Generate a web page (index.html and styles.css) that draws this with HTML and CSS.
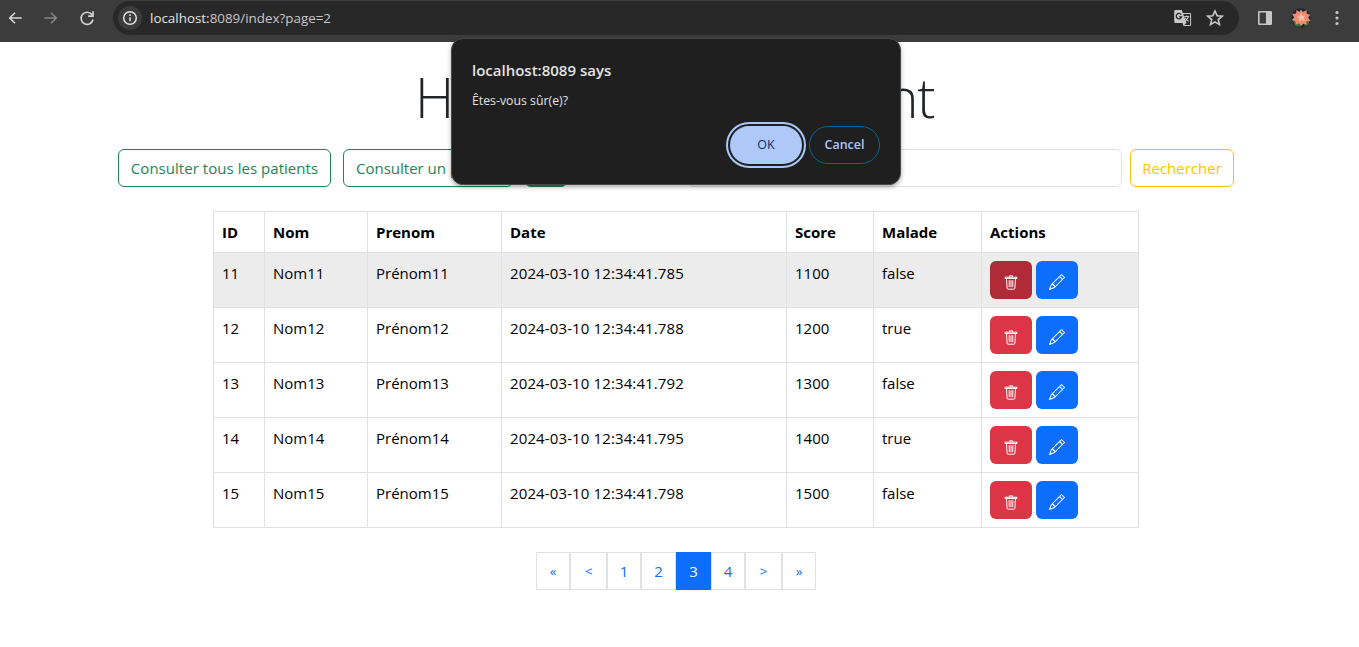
FILE: index.html
```html
<!DOCTYPE html>
<html lang="fr">
<head>
<meta charset="utf-8">
<title>Hospital Management</title>
<link rel="stylesheet" href="styles.css">
</head>
<body>
<svg class="defs" width="0" height="0">
  <symbol id="trash" viewBox="0 0 16 16"><path d="M6.500 1.800h3v1.200M6.500 3V1.800M2 3.200h12v1.300H2zM3.500 4.500l.6 9.800q.1.900 1 .900h5.800q.9 0 1-.900l.6-9.800M6.200 6.200v7M8 6.200v7M9.800 6.200v7"/></symbol>
  <symbol id="pencil" viewBox="0 0 16 16"><path d="M12.146.146a.5.5 0 0 1 .708 0l3 3a.5.5 0 0 1 0 .708l-10 10a.5.5 0 0 1-.168.110l-5 2a.5.5 0 0 1-.650-.650l2-5a.5.5 0 0 1 .110-.168zM11.207 2.500 13.500 4.793 14.793 3.500 12.500 1.207zm1.586 3L10.500 3.207 4 9.707V10h.5a.5.5 0 0 1 .5.5v.5h.5a.5.5 0 0 1 .5.5v.5h.293zm-9.761 5.175-.106.106-1.528 3.821 3.821-1.528.106-.106A.5.5 0 0 1 5 12.500V12h-.5a.5.5 0 0 1-.5-.5V11h-.5a.5.5 0 0 1-.468-.325"/></symbol>
</svg>
<header class="browser">
  <svg class="nav" viewBox="0 0 24 24"><path d="M21 12H5M12 5l-7 7 7 7"/></svg>
  <svg class="nav nav-off" viewBox="0 0 24 24"><path d="M3 12h16M12 5l7 7-7 7"/></svg>
  <svg class="nav" viewBox="0 0 24 24"><path d="M18.500 7.500A8 8 0 1 0 20 14M20 3v6.500h-6.500"/></svg>
  <div class="address">
    <span class="info"><svg viewBox="0 0 16 16"><circle cx="8" cy="8" r="6.300"/><path d="M8 7.300v4M8 4.300v1.600"/></svg></span>
    <span class="url"><b>localhost:</b>8089/index?page=2</span>
    <svg class="translate" viewBox="0 0 18 18"><path class="fill" d="M1.500 1h6.300l1 3h7a1.300 1.300 0 0 1 1.300 1.300v10.400a1.300 1.300 0 0 1-1.300 1.300H9.500l-1-3h-7A1.300 1.300 0 0 1 .2 12.700V2.300A1.300 1.300 0 0 1 1.500 1z"/><path class="cut" d="M9.200 5h6.300q.6 0 .6.600v9.800q0 .6-.6.600h-5l2-2.200z"/><path class="g" d="M7.200 5.600a2.700 2.700 0 1 0 .4 2.300H5.200"/><path class="x" d="M10.300 7.500h5M12.800 6.500v1M14.500 7.500q-.7 2.700-3.300 4.500M11.200 8.700q1 2.200 3.500 3.700"/></svg>
    <svg class="star" viewBox="0 0 18 18"><path d="M9 2l2.100 4.700 5.100.5-3.900 3.400 1.200 5L9 12.900l-4.500 2.700 1.200-5-3.900-3.400 5.100-.5z"/></svg>
  </div>
  <svg class="panel" viewBox="0 0 16 16"><path fill-rule="evenodd" d="M2.200 1h11.600A1.200 1.200 0 0 1 15 2.200v11.600a1.200 1.200 0 0 1-1.200 1.200H2.200A1.200 1.200 0 0 1 1 13.800V2.200A1.200 1.200 0 0 1 2.200 1zM2.600 2.600v10.800h6.400V2.600z"/></svg>
  <svg class="avatar" viewBox="0 0 20 20"><circle cx="10" cy="10" r="9.700" fill="#19262b"/><path d="M1 12l5 1 4 6-5-1zM14 12l5 0-2 5-4 1z" fill="#3c7a3a"/><path d="M10 1.500l2 2.500L15.500 2l.3 3.700 3.400 1-2 3 2.300 3-4.200.8.200 3.100-3.200-.8L10 18l-2-2.400-3.500 1 .2-3.300L.8 12l2.400-2.600L1.200 6l4-.4.300-3.700L8.500 4z" fill="#f08a73"/><path d="M10 5l1.500 3 3-.5-2 2.500 1.500 3-3.500-1.300L8 14l.2-3.200L5.500 9l3-.7z" fill="#ffc0a8"/></svg>
  <svg class="dots" viewBox="0 0 4 16"><circle cx="2" cy="2.500" r="1.600"/><circle cx="2" cy="8" r="1.600"/><circle cx="2" cy="13.500" r="1.600"/></svg>
</header>

<main>
  <h1>Hospital Management</h1>
  <div class="toolbar">
    <button class="btn green all">Consulter tous les patients</button>
    <button class="btn green one">Consulter un patient</button>
    <button class="btn add"></button>
    <input class="search" type="text">
    <button class="btn yellow">Rechercher</button>
  </div>
  <table>
    <colgroup><col class="c1"><col class="c2"><col class="c3"><col class="c4"><col class="c5"><col class="c6"><col class="c7"></colgroup>
    <thead><tr><th>ID</th><th>Nom</th><th>Prenom</th><th>Date</th><th>Score</th><th>Malade</th><th>Actions</th></tr></thead>
    <tbody>
      <tr class="hover"><td>11</td><td>Nom11</td><td>Prénom11</td><td class="date">2024-03-10 12:34:41.785</td><td>1100</td><td>false</td><td><div class="actions"><button class="act del"><svg><use href="#trash"/></svg></button><button class="act edit"><svg><use href="#pencil"/></svg></button></div></td></tr>
      <tr><td>12</td><td>Nom12</td><td>Prénom12</td><td class="date">2024-03-10 12:34:41.788</td><td>1200</td><td>true</td><td><div class="actions"><button class="act del"><svg><use href="#trash"/></svg></button><button class="act edit"><svg><use href="#pencil"/></svg></button></div></td></tr>
      <tr><td>13</td><td>Nom13</td><td>Prénom13</td><td class="date">2024-03-10 12:34:41.792</td><td>1300</td><td>false</td><td><div class="actions"><button class="act del"><svg><use href="#trash"/></svg></button><button class="act edit"><svg><use href="#pencil"/></svg></button></div></td></tr>
      <tr><td>14</td><td>Nom14</td><td>Prénom14</td><td class="date">2024-03-10 12:34:41.795</td><td>1400</td><td>true</td><td><div class="actions"><button class="act del"><svg><use href="#trash"/></svg></button><button class="act edit"><svg><use href="#pencil"/></svg></button></div></td></tr>
      <tr><td>15</td><td>Nom15</td><td>Prénom15</td><td class="date">2024-03-10 12:34:41.798</td><td>1500</td><td>false</td><td><div class="actions"><button class="act del"><svg><use href="#trash"/></svg></button><button class="act edit"><svg><use href="#pencil"/></svg></button></div></td></tr>
    </tbody>
  </table>
  <nav class="pages">
    <a class="sym">«</a><a class="sym wide">&lt;</a><a>1</a><a class="mid">2</a><a class="mid current">3</a><a>4</a><a class="sym wide">&gt;</a><a class="sym">»</a>
  </nav>
</main>

<div class="dialog" role="dialog">
  <h2>localhost:8089 says</h2>
  <p>Êtes-vous sûr(e)?</p>
  <div class="choices"><button class="ok">OK</button><button class="cancel">Cancel</button></div>
</div>
</body>
</html>
```
FILE: styles.css
```css
* { box-sizing: border-box; }
body {
  margin: 0;
  height: 647px;
  overflow: hidden;
  background: #fff;
  color: #000;
  font: 15px/24px "Open Sans", "Noto Sans", sans-serif;
}
button, input { font: inherit; margin: 0; }
.defs { display: block; }

/* browser bar */
.browser {
  display: flex;
  align-items: center;
  height: 42px;
  padding: 0 15px 6px 6px;
  background: #3c3c3c;
}
.browser svg { flex: none; fill: #c7c7c7; }
.browser .nav { width: 18px; height: 18px; margin-right: 18px; fill: none; stroke: #d4d4d4; stroke-width: 2.2; }
.browser .nav-off { stroke: #858585; }
.address {
  display: flex;
  align-items: center;
  flex: none;
  width: 1126px;
  height: 34px;
  margin-right: 18px;
  margin-left: -1px;
  padding: 0 15px 0 5px;
  border-radius: 17px;
  background: #282828;
}
.info {
  display: flex;
  align-items: center;
  justify-content: center;
  width: 24px;
  height: 24px;
  border-radius: 50%;
  background: #3c3c3c;
}
.info svg { width: 16px; height: 16px; fill: none; stroke: #e3e3e3; stroke-width: 1.5; }
.url { flex: 1; margin-left: 8px; color: #c7c7c7; font-size: 13.4px; }
.url b { color: #e3e3e3; font-weight: 400; }
.translate { width: 18px; height: 18px; }
.address .cut { fill: #282828; }
.address .g { fill: none; stroke: #282828; stroke-width: 1.3; }
.address .x { fill: none; stroke: #c7c7c7; stroke-width: 1.1; }
.browser .star { width: 18px; height: 18px; margin-left: 14px; fill: none; stroke: #c7c7c7; stroke-width: 1.6; }
.panel { width: 16px; height: 16px; }
.avatar { width: 20px; height: 20px; margin-left: 18px; }
.dots { width: 4px; height: 16px; margin-left: 24px; }

/* page */
h1 {
  width: 513px;
  height: 67px;
  margin: 22px 0 18px 415px;
  color: #212529;
  font-size: 54.5px;
  font-weight: 300;
  line-height: 67px;
  letter-spacing: -1px;
  white-space: nowrap;
}
.toolbar { display: flex; width: 1116px; margin-left: 118px; }
.btn {
  flex: none;
  height: 38px;
  padding: 0 0 1px;
  border: 1px solid;
  border-radius: 6px;
  background: #fff;
  white-space: nowrap;
}
.green { margin-right: 12px; color: #198754; }
.all { width: 213px; letter-spacing: .04px; }
.one { width: 170px; padding-left: 12px; text-align: left; }
.add { width: 42px; margin-right: 120px; border-color: #198754; background: #198754; }
.search { flex: 1; min-width: 0; margin-right: 8px; border: 1px solid #dee2e6; border-radius: 6px; }
.yellow { width: 104px; color: #ffc107; }

table {
  width: 926px;
  margin: 24px 0 0 213px;
  border-collapse: collapse;
  table-layout: fixed;
}
.c1 { width: 51px; }
.c2 { width: 103px; }
.c3 { width: 134px; }
.c4 { width: 285px; }
.c5 { width: 87px; }
.c6 { width: 108px; }
.c7 { width: 157px; }
th, td {
  padding: 8px;
  border: 1px solid #dee2e6;
  text-align: left;
  vertical-align: top;
  white-space: nowrap;
}
th { height: 41px; font-weight: 700; }
td { height: 55px; }
.date { letter-spacing: .12px; }
.hover td { background: #ececec; }
.actions { display: flex; gap: 4px; }
.act {
  width: 42px;
  height: 38px;
  padding: 4px 0 0;
  border: 0;
  border-radius: 6px;
  background: #0d6efd;
  line-height: 0;
}
.act svg { width: 16px; height: 16px; fill: #fff; }
.del { background: #dc3545; }
.del svg { fill: none; stroke: #fff; stroke-width: 1; }
.hover .del { background: #b02a37; }

.pages { display: flex; margin: 24px 0 0 536px; color: #0d6efd; }
.pages a {
  width: 34px;
  height: 38px;
  padding-top: 6px;
  border: 1px solid #dee2e6;
  text-align: center;
  line-height: 24px;
}
.pages .wide { width: 37px; }
.pages .mid { width: 35px; }
.pages .sym { font-size: 13.5px; }
.pages .current { border-color: #0d6efd; background: #0d6efd; color: #fff; }

/* confirmation dialog over the page */
.dialog {
  position: absolute;
  top: 38px;
  left: 451px;
  width: 450px;
  height: 147px;
  padding: 20px;
  border: 1px solid #484848;
  border-radius: 12px;
  background: #1f1f1f;
  box-shadow: 0 2px 4px rgba(0, 0, 0, .35);
  color: #e3e3e3;
}
.dialog h2 { margin: 0; font-size: 15px; font-weight: 600; line-height: 22px; }
.dialog p { margin: 11px 0 0; font-size: 12.3px; line-height: 18px; }
.choices { display: flex; justify-content: flex-end; gap: 7px; margin-top: 16px; }
.choices button { height: 38px; border-radius: 19px; font-size: 12.5px; font-weight: 600; }
.choices .ok {
  width: 72px;
  border: 0;
  background: #aec9f8;
  color: #062e6f;
  font-weight: 500;
  outline: 2px solid #a8c7fa;
  outline-offset: 2px;
}
.cancel { width: 71px; border: 1px solid #0b6596; background: #1f1f1f; color: #a8c7fa; padding: 0; }
```
